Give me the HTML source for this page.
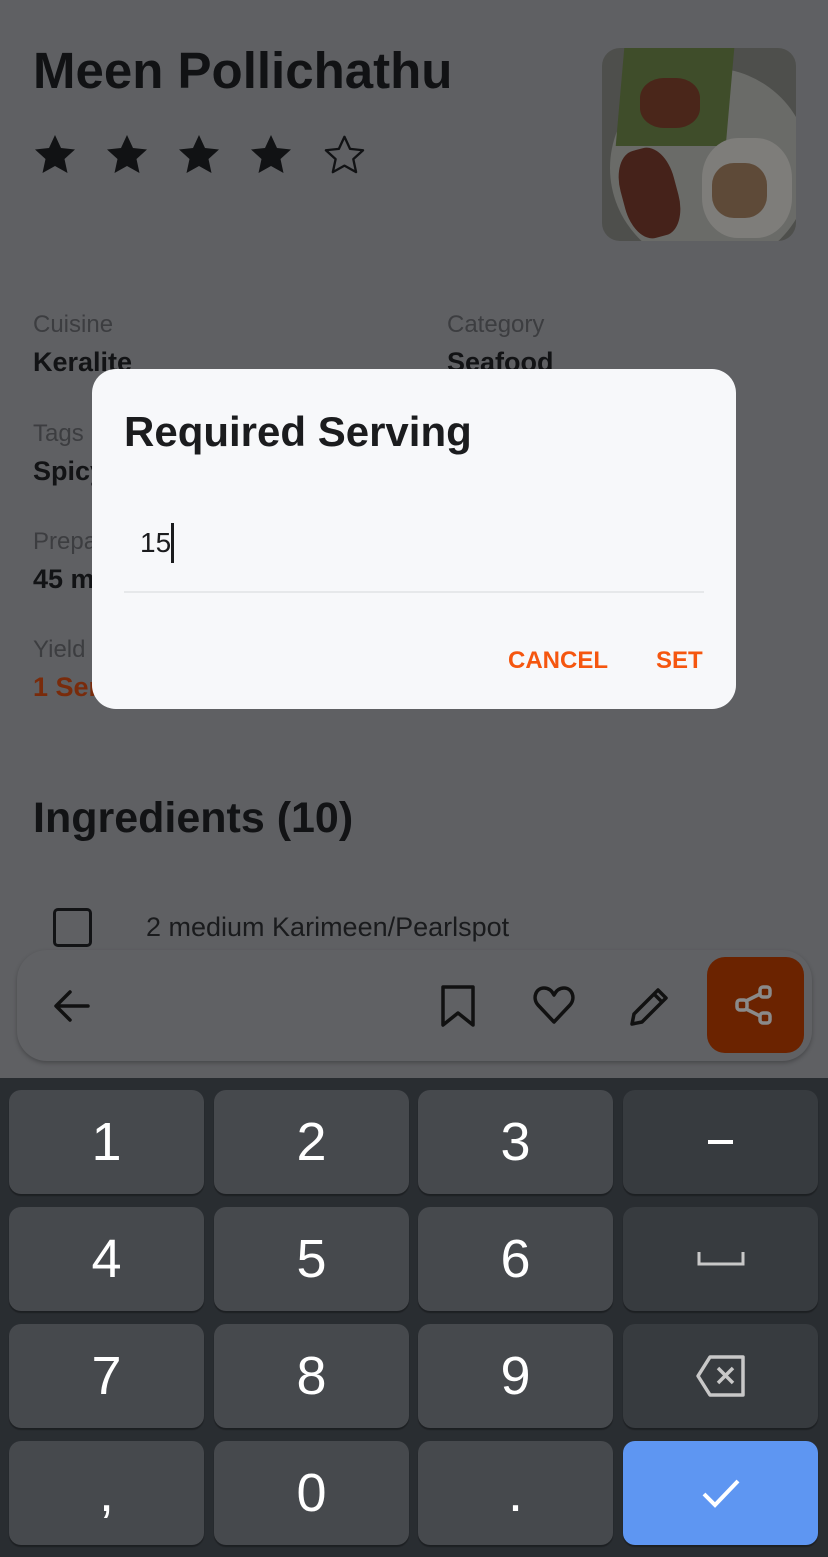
<!DOCTYPE html>
<html><head><meta charset="utf-8"><style>
*{margin:0;padding:0;box-sizing:border-box}
body{width:828px;height:1557px;background:#5f6063;font-family:"Liberation Sans",sans-serif;position:relative;overflow:hidden}
.a{position:absolute;white-space:nowrap}
.lbl{font-size:24px;color:#3c3d40}
.val{font-size:27px;font-weight:bold;color:#121315}
.k{position:absolute;width:195px;height:104px;border-radius:12px;background:#46494d;color:#fff;font-size:54px;display:flex;align-items:center;justify-content:center;box-shadow:0 2px 1px rgba(0,0,0,.3)}
.k.d{background:#373b3f}
</style></head><body>
<div class="a" style="left:33px;top:41px;font-size:51px;font-weight:bold;color:#111214">Meen Pollichathu</div>
<svg class="a" style="left:33px;top:132px" width="340" height="44" viewBox="0 0 340 44">
<g fill="#111214"><path id="s" d="M22 3l6 13 14 1.5-10.5 9.5 3 14L22 34 9.5 41l3-14L2 17.5 16 16z"/></g>
<use href="#s" x="72" fill="#111214"/><use href="#s" x="144" fill="#111214"/><use href="#s" x="216" fill="#111214"/>
<path d="M22 3l6 13 14 1.5-10.5 9.5 3 14L22 34 9.5 41l3-14L2 17.5 16 16z" transform="translate(291 2) scale(.93)" fill="none" stroke="#111214" stroke-width="2.5" stroke-linejoin="round"/>
</svg>
<div class="a" style="left:602px;top:48px;width:194px;height:193px;border-radius:18px;background:#4e4f4c;overflow:hidden">
<div class="a" style="border-radius:50%;background:#6a6b68;left:8px;top:20px;width:200px;height:200px"></div>
<div class="a" style="left:18px;top:0;width:110px;height:98px;background:#3f4d2a;transform:skewX(-5deg)"></div>
<div class="a" style="left:38px;top:30px;width:60px;height:50px;background:#4a261a;border-radius:40%"></div>
<div class="a" style="left:100px;top:90px;width:90px;height:100px;background:#7e7d7a;border-radius:40%"></div>
<div class="a" style="left:20px;top:100px;width:55px;height:90px;background:#45221a;border-radius:40%;transform:rotate(-15deg)"></div>
<div class="a" style="left:110px;top:115px;width:55px;height:55px;background:#5e4a38;border-radius:40%"></div>
</div>
<div class="a lbl" style="left:33px;top:311px">Cuisine</div>
<div class="a val" style="left:33px;top:347px">Keralite</div>
<div class="a lbl" style="left:447px;top:311px">Category</div>
<div class="a val" style="left:447px;top:347px">Seafood</div>
<div class="a lbl" style="left:33px;top:420px">Tags</div>
<div class="a val" style="left:33px;top:456px">Spicy</div>
<div class="a lbl" style="left:33px;top:528px">Preparation</div>
<div class="a val" style="left:33px;top:564px">45 mins</div>
<div class="a lbl" style="left:33px;top:636px">Yield</div>
<div class="a val" style="left:33px;top:672px;color:#792b0b">1 Serving</div>
<div class="a" style="left:33px;top:794px;font-size:43px;font-weight:bold;color:#121315">Ingredients (10)</div>
<div class="a" style="left:53px;top:908px;width:39px;height:39px;border:3px solid #121315;border-radius:5px"></div>
<div class="a" style="left:146px;top:912px;font-size:27px;color:#1a1b1d">2 medium Karimeen/Pearlspot</div>
<div class="a" style="left:17px;top:950px;width:795px;height:111px;border-radius:30px;background:#606164;box-shadow:0 2px 4px rgba(0,0,0,.25)"></div>
<svg class="a" style="left:52px;top:986px" width="40" height="40" viewBox="0 0 40 40"><path d="M36 20H5M18 6L4 20l14 14" fill="none" stroke="#111" stroke-width="3.5" stroke-linecap="round" stroke-linejoin="round"/></svg>
<svg class="a" style="left:438px;top:984px" width="40" height="44" viewBox="0 0 40 44"><path d="M5 3h30v38L20 29 5 41z" fill="none" stroke="#111" stroke-width="3.5" stroke-linejoin="round"/></svg>
<svg class="a" style="left:532px;top:985px" width="44" height="40" viewBox="0 0 44 40"><path d="M22 37L6 20C0 13 4 3 12 3c5 0 8 3 10 7 2-4 5-7 10-7 8 0 12 10 6 17z" fill="none" stroke="#111" stroke-width="3.5" stroke-linejoin="round"/></svg>
<svg class="a" style="left:628px;top:984px" width="44" height="44" viewBox="0 0 44 44"><path d="M4 40l2-10L30 6l8 8-24 24zM26 10l8 8" fill="none" stroke="#111" stroke-width="3.5" stroke-linejoin="round"/></svg>
<div class="a" style="left:707px;top:957px;width:97px;height:96px;border-radius:18px;background:#6b2300"></div>
<svg class="a" style="left:734px;top:984px" width="42" height="42" viewBox="0 0 42 42"><g fill="none" stroke="#8a8a8a" stroke-width="3.5"><rect x="3" y="16" width="10" height="10" rx="3"/><rect x="26" y="3" width="10" height="10" rx="3"/><rect x="26" y="29" width="10" height="10" rx="3"/><path d="M12 17l14-7M12 25l14 7"/></g></svg>
<div class="a" style="left:92px;top:369px;width:644px;height:340px;border-radius:24px;background:#f7f8fa"></div>
<div class="a" style="left:124px;top:408px;font-size:42px;font-weight:bold;color:#1b1c1e">Required Serving</div>
<div class="a" style="left:140px;top:527px;font-size:28px;color:#1b1c1e">15</div>
<div class="a" style="left:171px;top:523px;width:3px;height:40px;background:#1b1c1e"></div>
<div class="a" style="left:124px;top:591px;width:580px;height:2px;background:#e6e8ea"></div>
<div class="a" style="left:508px;top:647px;font-size:24px;font-weight:bold;color:#f5560f">CANCEL</div>
<div class="a" style="left:656px;top:647px;font-size:24px;font-weight:bold;color:#f5560f">SET</div>
<div class="a" style="left:0;top:1078px;width:828px;height:479px;background:#292d31"></div>
<div class="k" style="left:9px;top:1090px">1</div>
<div class="k" style="left:214px;top:1090px">2</div>
<div class="k" style="left:418px;top:1090px">3</div>
<div class="k d" style="left:623px;top:1090px"><div style="width:25px;height:4px;background:#fff"></div></div>
<div class="k" style="left:9px;top:1207px">4</div>
<div class="k" style="left:214px;top:1207px">5</div>
<div class="k" style="left:418px;top:1207px">6</div>
<div class="k d" style="left:623px;top:1207px"><svg width="48" height="16"><path d="M2 1v12h44V1" fill="none" stroke="#c8c8c8" stroke-width="3"/></svg></div>
<div class="k" style="left:9px;top:1324px">7</div>
<div class="k" style="left:214px;top:1324px">8</div>
<div class="k" style="left:418px;top:1324px">9</div>
<div class="k d" style="left:623px;top:1324px"><svg width="54" height="44" viewBox="0 0 54 44"><path d="M16 3h33v38H16L4 22z" fill="none" stroke="#c8c8c8" stroke-width="3.5" stroke-linejoin="round"/><path d="M24 14l15 15M39 14L24 29" stroke="#c8c8c8" stroke-width="3.5"/></svg></div>
<div class="k" style="left:9px;top:1441px">,</div>
<div class="k" style="left:214px;top:1441px">0</div>
<div class="k" style="left:418px;top:1441px">.</div>
<div class="k" style="left:623px;top:1441px;background:#5e96f2"><svg width="40" height="30" viewBox="0 0 40 30"><path d="M3 16l11 11L37 3" fill="none" stroke="#fff" stroke-width="4"/></svg></div>
</body></html>
